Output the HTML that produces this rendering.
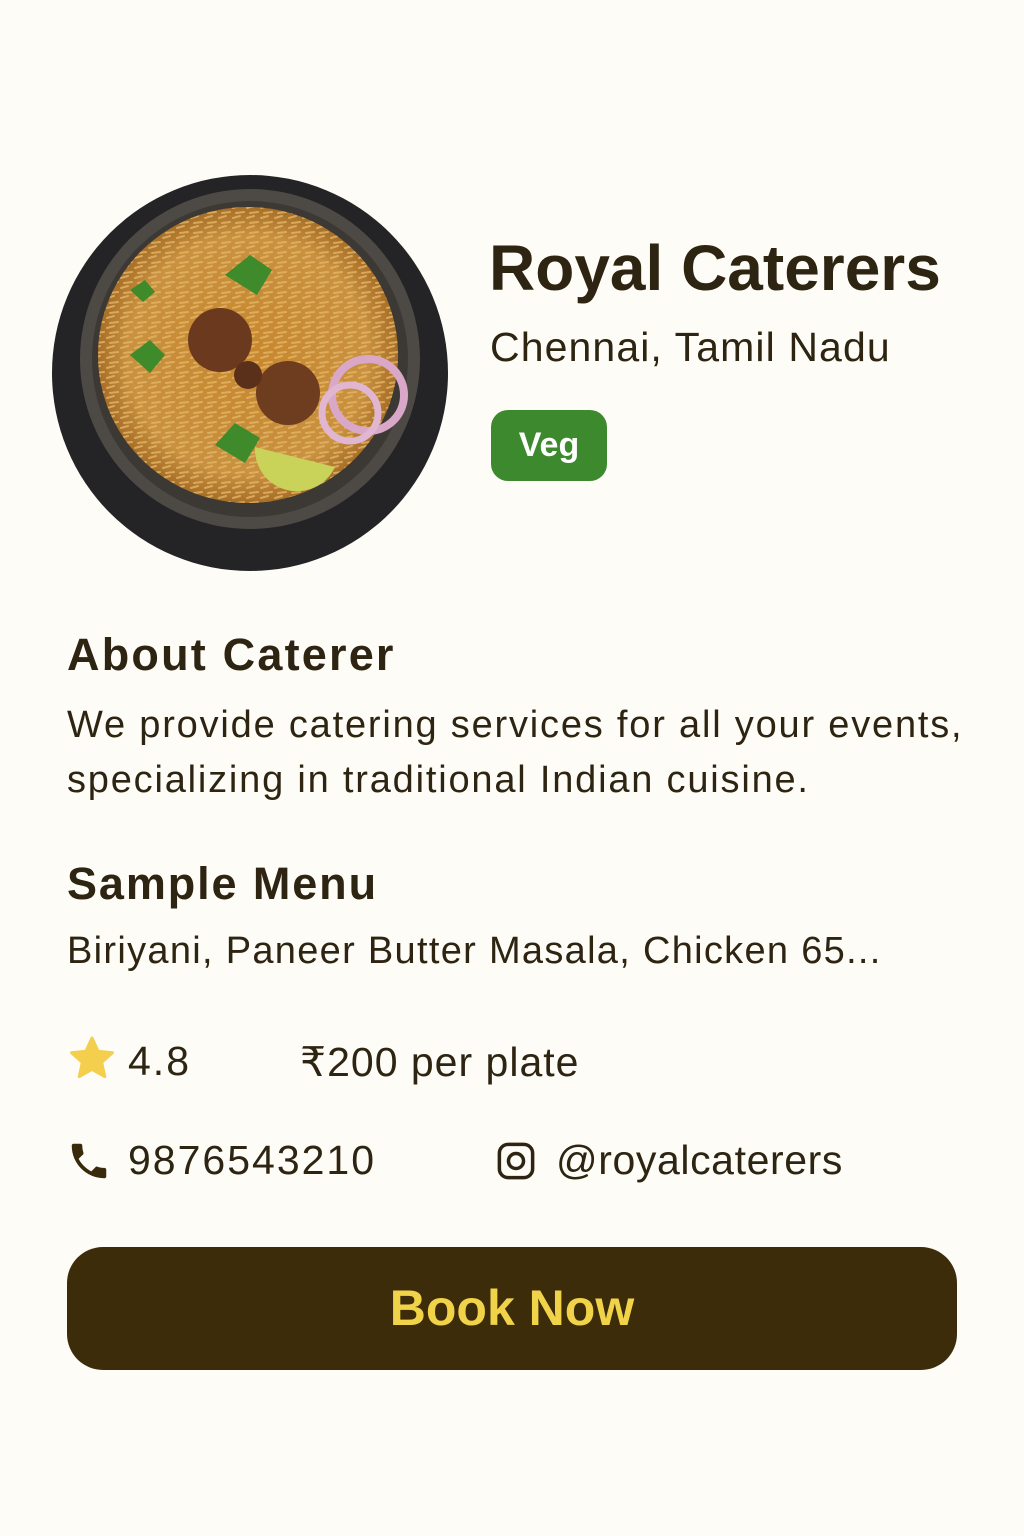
<!DOCTYPE html>
<html><head><meta charset="utf-8"><style>
body{margin:0;background:#fdfcf7;width:1024px;height:1536px;position:relative;overflow:hidden;font-family:"Liberation Sans",sans-serif;color:#2e2412}
.a{position:absolute;white-space:nowrap}
</style></head><body>
<svg class="a" style="left:50px;top:175px" width="400" height="400" viewBox="0 0 400 400">
<defs><radialGradient id="r" cx="50%" cy="50%" r="50%"><stop offset="0" stop-color="#c8872e"/><stop offset="0.8" stop-color="#c99140"/><stop offset="1" stop-color="#a86f28"/></radialGradient>
<pattern id="p" width="14" height="10" patternUnits="userSpaceOnUse"><path d="M1 3l7 -2M4 8l8 -1" stroke="#e2b566" stroke-width="2" stroke-linecap="round"/></pattern></defs>
<circle cx="200" cy="198" r="198" fill="#242427"/>
<circle cx="200" cy="184" r="170" fill="#4d4a46"/>
<circle cx="200" cy="184" r="158" fill="#3c3935"/>
<ellipse cx="198" cy="180" rx="150" ry="148" fill="url(#r)"/>
<ellipse cx="198" cy="180" rx="150" ry="148" fill="url(#p)" opacity="0.8"/>
<circle cx="170" cy="165" r="32" fill="#6b3a1e"/>
<circle cx="238" cy="218" r="32" fill="#6e3c1f"/>
<circle cx="198" cy="200" r="14" fill="#5a301a"/>
<path d="M80 180l20-15 15 15-15 18zM165 270l20-22 25 15-15 25zM175 100l25-20 22 15-15 25zM80 115l15-10 10 12-12 10z" fill="#3f8a2a"/>
<circle cx="318" cy="220" r="36" fill="none" stroke="#d9a8c8" stroke-width="8"/>
<circle cx="300" cy="238" r="28" fill="none" stroke="#e0b6d0" stroke-width="7"/>
<path d="M205 272a42 42 0 0 0 80 20z" fill="#c9d35a"/>
</svg>
<div class="a" style="left:489px;top:231px;font-size:64px;font-weight:bold">Royal Caterers</div>
<div class="a" style="left:490px;top:324px;font-size:41px;letter-spacing:1.1px">Chennai, Tamil Nadu</div>
<div class="a" style="left:491px;top:410px;width:116px;height:71px;border-radius:17px;background:#3d8a2e;color:#fff;font-weight:bold;font-size:34px;line-height:71px;text-align:center">Veg</div>
<div class="a" style="left:67px;top:629px;font-size:45px;font-weight:bold;letter-spacing:2.2px">About Caterer</div>
<div class="a" style="left:67px;top:698px;font-size:38px;line-height:55px;letter-spacing:1.8px">We provide catering services for all your events,<br>specializing in traditional Indian cuisine.</div>
<div class="a" style="left:67px;top:858px;font-size:45px;font-weight:bold;letter-spacing:1.9px">Sample Menu</div>
<div class="a" style="left:67px;top:930px;font-size:38px;letter-spacing:1.3px">Biriyani, Paneer Butter Masala, Chicken 65...</div>
<svg class="a" style="left:66px;top:1034px" width="52" height="50" viewBox="0 0 24 24"><path d="M12 2l2.9 6.3 6.9.7-5.2 4.6 1.5 6.8L12 16.9 5.9 20.4l1.5-6.8L2.2 9l6.9-.7z" fill="#f4cf4d" stroke="#f4cf4d" stroke-linejoin="round" stroke-width="1.5"/></svg>
<div class="a" style="left:128px;top:1038px;font-size:41px;letter-spacing:2px">4.8</div>
<div class="a" style="left:300px;top:1038px;font-size:41px;letter-spacing:1px">₹200 per plate</div>
<svg class="a" style="left:66px;top:1138px" width="46" height="46" viewBox="0 0 24 24"><path d="M6.6 10.8c1.4 2.8 3.8 5.1 6.6 6.6l2.2-2.2c.3-.3.7-.4 1-.2 1.1.4 2.3.6 3.6.6.6 0 1 .4 1 1V20c0 .6-.4 1-1 1C10.6 21 3 13.4 3 4c0-.6.4-1 1-1h3.5c.6 0 1 .4 1 1 0 1.3.2 2.5.6 3.6.1.3 0 .7-.2 1z" fill="#3a2a0c"/></svg>
<div class="a" style="left:128px;top:1137px;font-size:41px;letter-spacing:2px">9876543210</div>
<svg class="a" style="left:495px;top:1140px" width="42" height="42" viewBox="0 0 24 24"><rect x="2.5" y="2.5" width="19" height="19" rx="5" fill="none" stroke="#2e2412" stroke-width="2"/><circle cx="12" cy="12" r="4.3" fill="none" stroke="#2e2412" stroke-width="2"/></svg>
<div class="a" style="left:556px;top:1137px;font-size:41px;letter-spacing:0.6px">@royalcaterers</div>
<div class="a" style="left:67px;top:1247px;width:890px;height:123px;border-radius:36px;background:#3d2c0a;color:#f1d34a;font-weight:bold;font-size:50px;line-height:123px;text-align:center">Book Now</div>
</body></html>
